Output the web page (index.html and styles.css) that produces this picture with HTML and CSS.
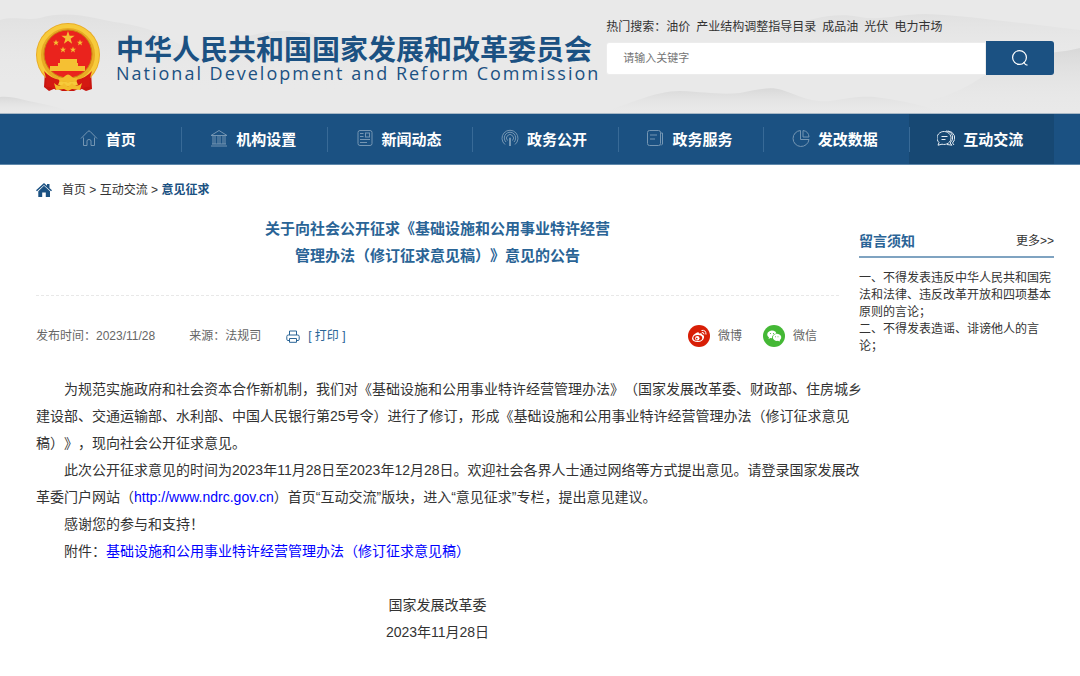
FILE: index.html
```html
<!DOCTYPE html>
<html lang="zh-CN">
<head>
    <meta charset="UTF-8">
    <meta name="viewport" content="width=device-width, initial-scale=1.0">
    <title>意见征求-国家发展和改革委员会</title>
    <link rel="stylesheet" href="styles.css">
</head>
<body>
    <header class="header">
        <svg class="header-bg" viewBox="0 0 1080 113" preserveAspectRatio="none" aria-hidden="true">
            <defs>
                <linearGradient id="hill" x1="0" y1="0" x2="0" y2="1">
                    <stop offset="0" stop-color="#c8c8c8" stop-opacity="0.5"/>
                    <stop offset="1" stop-color="#e6e6e6" stop-opacity="0"/>
                </linearGradient>
            </defs>
            <path fill="url(#hill)" opacity="0.5" d="M0 20 C15 16 25 21 40 18 C60 12 80 15 95 18 C120 24 140 24 160 34 L200 55 L200 85 L0 85Z"/>
            <path fill="url(#hill)" opacity="0.4" d="M190 60 C220 45 250 32 280 31 C310 30 330 38 360 58 L360 90 L190 90Z"/>
            <path fill="url(#hill)" d="M0 97 C15 96 25 101 38 103 C55 106 65 110 75 113 L0 113Z"/>
            <path fill="url(#hill)" d="M600 113 C630 104 655 91 680 91 C705 92 720 95 740 93 C755 90 770 86 782 90 C800 96 812 103 830 101 C850 98 865 95 882 98 C900 101 920 103 940 113Z"/>
            <path fill="url(#hill)" opacity="0.5" d="M780 30 C810 18 835 12 860 17 C880 21 900 14 925 14 C960 15 990 20 1030 24 L1080 30 L1080 60 L780 60Z"/>
            <path fill="url(#hill)" d="M930 100 C970 92 990 66 1020 60 C1040 52 1055 54 1080 48 L1080 113 L930 113Z"/>
        </svg>
        <div class="header-inner">
            <a class="logo" href="#">
                <svg class="emblem" viewBox="0 0 64 69" aria-hidden="true">
                    <path fill="#c8150f" d="M9 48 L55 48 L56 66 L50 68 L44 65 L38 68 L26 68 L20 65 L13 68 L8 64Z"/>
                    <circle cx="32" cy="32" r="32" fill="#e9ab24"/>
                    <circle cx="32" cy="32" r="29" fill="none" stroke="#f7cb3b" stroke-width="4"/>
                    <circle cx="32" cy="31" r="24" fill="#ea231d" stroke="#c98512"/>
                    <g fill="#f5c033">
                        <path d="M32 8 l1.600 4.800 5 0 -4 3 1.500 4.900 -4.100 -2.900 -4.100 2.900 1.500 -4.900 -4 -3 5 0Z"/>
                        <path id="star" d="M20 16.500 l.8 2.200 2.300 0 -1.800 1.400 .6 2.300 -1.900 -1.300 -1.900 1.300 .6 -2.300 -1.800 -1.400 2.300 0Z"/>
                        <use href="#star" x="24"/>
                        <use href="#star" x="7" y="7"/>
                        <use href="#star" x="17" y="7"/>
                        <path d="M24 36 H41 V40 H42 V43 H49 V48 H14 V43 H22 V40 H24Z"/>
                    </g>
                    <path fill="#d41912" d="M8 48 Q14 55 24 57 L20 67 Q14 63 10 64 Q11 56 8 48Z M56 48 Q50 55 40 57 L44 67 Q50 63 54 64 Q53 56 56 48Z"/>
                    <path fill="#f3bd2c" d="M22 55 Q27 56 29 53 Q32 50 35 53 Q37 56 42 55 L40 59 Q36 57 32 60 Q28 57 24 59Z M18 60 Q24 66 28 60 L32 64 L36 60 Q40 66 46 60 L44 67 L36 66 L32 68 L28 66 L20 67Z"/>
                </svg>
                <span class="logo-text">
                    <span class="logo-cn">中华人民共和国国家发展和改革委员会</span>
                    <span class="logo-en">National Development and Reform Commission</span>
                </span>
            </a>
            <div class="search">
                <div class="hot-words">
                    <span>热门搜索：</span>
                    <a href="#">油价</a>
                    <a href="#">产业结构调整指导目录</a>
                    <a href="#">成品油</a>
                    <a href="#">光伏</a>
                    <a href="#">电力市场</a>
                </div>
                <form class="search-form">
                    <input type="text" class="search-input" placeholder="请输入关键字" aria-label="请输入关键字">
                    <button type="button" class="search-btn" aria-label="搜索">
                        <svg width="16" height="16" viewBox="0 0 16 16" fill="none" stroke="#fff" stroke-width="1.200">
                            <circle cx="7.500" cy="7.500" r="6.900"/>
                            <path d="M11.500 12 l2 2.500 2 .8"/>
                        </svg>
                    </button>
                </form>
            </div>
        </div>
    </header>

    <nav class="nav">
        <ul class="nav-list">
            <li><a href="#">
                <svg class="nav-icon" viewBox="0 0 18 18"><path d="M1 9.500 L8 2.300 Q9 1.400 10 2.300 L17 9.500 M3.500 8.500 V16.500 H7 V12 Q7 10.500 9 10.500 Q11 10.500 11 12 V16.500 H14.500 V8.500"/></svg>
                首页</a></li>
            <li><a href="#">
                <svg class="nav-icon" viewBox="0 0 18 18"><path d="M1 6.500 L9 1.500 L17 6.500Z M3 6.500 V15 M5 6.500 V15 M8 6.500 V15 M10 6.500 V15 M13 6.500 V15 M15 6.500 V15 M2 15 H16 M1 17 H17"/></svg>
                机构设置</a></li>
            <li><a href="#">
                <svg class="nav-icon" viewBox="0 0 18 18"><rect x="2" y="1.500" width="14" height="15" rx="2"/><rect x="9.500" y="4" width="4" height="4"/><path d="M4 4.500 H7.500 M4 7.500 H7.500 M4 10.500 H14 M4 13.500 H11"/></svg>
                新闻动态</a></li>
            <li><a href="#">
                <svg class="nav-icon" viewBox="0 0 18 18"><path d="M4 15.500 A8 8 0 1 1 14 15.500 M5 13 A5.700 5.700 0 1 1 13 13 M6.500 11.500 A3.500 3.500 0 1 1 11.500 11.500 M8.500 17 V9 H9.500 V17"/></svg>
                政务公开</a></li>
            <li><a href="#">
                <svg class="nav-icon" viewBox="0 0 18 18"><rect x="1.500" y="1.500" width="13" height="15" rx="2"/><path d="M4 6 H11 M4 10 H9 M14.500 4 H16.500 V15 L15 16.500"/></svg>
                政务服务</a></li>
            <li><a href="#">
                <svg class="nav-icon" viewBox="0 0 18 18"><path d="M8.500 1.500 A8 8 0 1 0 17 10.500 M8.500 1.500 V10.500 H17 M11 1.500 A7 7 0 0 1 17 8 H11Z"/></svg>
                发改数据</a></li>
            <li><a href="#" class="active">
                <svg class="nav-icon" viewBox="0 0 18 18"><path d="M2 13.500 A7 6.500 0 1 1 5 15.200 L1 16.200Z M9 2 A7 6.700 0 0 1 13 14 L15 16.200 L10 15.500 M11 2 A7.500 7 0 0 1 15.500 14 L17 16 M4.500 7.500 H10.500 M4.500 10.500 H8.500"/></svg>
                互动交流</a></li>
        </ul>
    </nav>

    <div class="container">
        <div class="breadcrumb">
            <svg width="16" height="14" viewBox="0 0 16 14" fill="#1b5182" aria-hidden="true">
                <path d="M8 0 L11 2.700 V1 H13.500 V5 L16 7.300 L15 8.300 L8 2 L1 8.300 L0 7.300Z M8 2.800 L14 8.200 V14 H9.800 V9.500 H6.200 V14 H2.300 V8.200Z"/>
            </svg>
            <span><a href="#">首页</a> &gt; <a href="#">互动交流</a> &gt; <a href="#" class="current">意见征求</a></span>
        </div>

        <div class="content">
            <main class="article">
                <h1 class="title">关于向社会公开征求《基础设施和公用事业特许经营<br>管理办法（修订征求意见稿）》意见的公告</h1>
                <div class="meta">
                    <span>发布时间：2023/11/28</span>
                    <span class="source">来源：法规司</span>
                    <a href="#" class="print">
                        <svg width="14" height="13" viewBox="0 0 14 13" fill="none" stroke="#2a6496" aria-hidden="true">
                            <path d="M3.500 5 V1 H10.500 V5 M3.500 10.500 H2 Q.8 10.500 .8 9.300 V6.500 Q.8 5 2.300 5 H11.700 Q13.200 5 13.200 6.500 V9.300 Q13.200 10.500 12 10.500 H10.500 M3.500 8.500 H10.500 V12.300 H3.500Z"/>
                        </svg>
                        [ 打印 ]
                    </a>
                    <div class="share">
                        <a href="#">
                            <svg width="22" height="22" viewBox="0 0 22 22" aria-hidden="true">
                                <circle cx="11" cy="11" r="11" fill="#d81e06"/>
                                <path fill="#fff" d="M9 7.500 Q11 6.500 11 8.500 Q14 7.500 14 9.500 Q16.500 10.300 16 12.700 Q15 16.800 9.800 17 Q4.300 16.800 4 13.500 Q4.500 9.500 9 7.500Z"/>
                                <ellipse cx="9.800" cy="13" rx="4.500" ry="3" fill="#d81e06"/>
                                <circle cx="9.300" cy="13.200" r="2.200" fill="#fff"/>
                                <circle cx="8.700" cy="13.600" r="0.900" fill="#d81e06"/>
                                <path fill="none" stroke="#fff" d="M13.500 5.500 Q18 4.500 18 9.500 M13.800 7.500 Q16 7.200 16 9.300"/>
                            </svg>
                            微博
                        </a>
                        <a href="#">
                            <svg width="22" height="22" viewBox="0 0 22 22" aria-hidden="true">
                                <circle cx="11" cy="11" r="11" fill="#44b835"/>
                                <path fill="#fff" d="M5.500 14 L6 12.500 A4.700 3.900 0 1 1 13.500 8.600 Q9 9 9 13.300 L7.500 13Z"/>
                                <path fill="#fff" d="M16.500 16.500 L15 15.800 A4.200 3.500 0 1 1 17 14.900Z"/>
                                <g fill="#44b835">
                                    <circle cx="7.500" cy="8.500" r="0.600"/><circle cx="10.500" cy="8.500" r="0.600"/>
                                    <circle cx="12.500" cy="11.700" r="0.500"/><circle cx="15" cy="11.700" r="0.500"/>
                                </g>
                            </svg>
                            微信
                        </a>
                    </div>
                </div>
                <div class="article-body">
                    <p>为规范实施政府和社会资本合作新机制，我们对《基础设施和公用事业特许经营管理办法》（国家发展改革委、财政部、住房城乡建设部、交通运输部、水利部、中国人民银行第25号令）进行了修订，形成《基础设施和公用事业特许经营管理办法（修订征求意见稿）》，现向社会公开征求意见。</p>
                    <p>此次公开征求意见的时间为2023年11月28日至2023年12月28日。欢迎社会各界人士通过网络等方式提出意见。请登录国家发展改革委门户网站（<a href="#">http://www.ndrc.gov.cn</a>）首页“互动交流”版块，进入“意见征求”专栏，提出意见建议。</p>
                    <p>感谢您的参与和支持！</p>
                    <p>附件：<a href="#">基础设施和公用事业特许经营管理办法（修订征求意见稿）</a></p>
                </div>
                <div class="signature">
                    <p>国家发展改革委</p>
                    <p>2023年11月28日</p>
                </div>
            </main>

            <aside class="sidebar">
                <div class="sidebar-head">
                    <h2>留言须知</h2>
                    <a href="#">更多&gt;&gt;</a>
                </div>
                <p>一、不得发表违反中华人民共和国宪法和法律、违反改革开放和四项基本原则的言论；</p>
                <p>二、不得发表造谣、诽谤他人的言论；</p>
            </aside>
        </div>
    </div>
</body>
</html>
```
FILE: styles.css
```css
* {
    box-sizing: border-box;
}

body {
    margin: 0;
    font-family: "Liberation Sans", "Noto Sans CJK SC", sans-serif;
    font-size: 12px;
    color: #333;
    background: #fff;
    text-spacing-trim: space-all;
}

a {
    color: inherit;
    text-decoration: none;
}

h1, h2, p, ul {
    margin: 0;
    padding: 0;
}

svg {
    flex-shrink: 0;
}

/* header */
.header {
    position: relative;
    background: #e9e9e9;
    border-bottom: 1px solid #a9b8c6;
}

.header-bg {
    position: absolute;
    top: 0;
    left: 0;
    width: 100%;
    height: 100%;
}

.header-inner {
    position: relative;
    display: flex;
    gap: 6px;
    padding: 18px 26px 21px 36px;
}

.logo {
    display: flex;
    align-items: flex-start;
    gap: 16px;
    padding-top: 5px;
    color: #1b5182;
    white-space: nowrap;
}

.emblem {
    width: 64px;
    height: 69px;
}

.logo-text {
    display: flex;
    flex-direction: column;
    padding-top: 14px;
}

.logo-cn {
    font-size: 28px;
    font-weight: bold;
    line-height: 28px;
}

.logo-en {
    font-family: "Open Sans", sans-serif;
    font-size: 18px;
    line-height: 16px;
    letter-spacing: 2px;
}

.search {
    flex: 1;
    min-width: 0;
}

.hot-words {
    display: flex;
    gap: 6px;
    line-height: 18px;
    white-space: nowrap;
}

.hot-words span {
    margin-right: -6px;
}

.search-form {
    display: flex;
    align-items: center;
    margin-top: 5px;
}

.search-input {
    flex: 1;
    min-width: 0;
    height: 33px;
    padding: 0 16px;
    border: 1px solid #ececec;
    border-radius: 3px 0 0 3px;
    font-family: inherit;
    font-size: 11px;
    color: #333;
    background: #fff;
}

.search-input::placeholder {
    color: #757575;
}

.search-btn {
    display: flex;
    align-items: center;
    justify-content: center;
    width: 68px;
    height: 34px;
    border: none;
    border-radius: 0 3px 3px 0;
    background: #1b5182;
    cursor: pointer;
}

/* nav */
.nav {
    padding: 0 26px 0 36px;
    background: #1b5182;
    border-bottom: 1px solid #5f88ab;
}

.nav-list {
    display: flex;
    list-style: none;
}

.nav-list li {
    flex: 1;
}

.nav-list a {
    position: relative;
    display: flex;
    align-items: center;
    justify-content: center;
    gap: 8px;
    height: 50px;
    padding: 0 2px 2px 0;
    font-size: 15px;
    font-weight: bold;
    color: #fff;
}

.nav-list li + li a::before {
    content: "";
    position: absolute;
    left: 0;
    top: 13px;
    width: 1px;
    height: 25px;
    background: #386a97;
}

.nav-list .active {
    background: #174873;
}

.nav-icon {
    width: 18px;
    height: 18px;
    fill: none;
    stroke: #7596b3;
}

.active .nav-icon {
    stroke: #e4ecf3;
}

/* content */
.container {
    padding: 16px 26px 24px 36px;
}

.breadcrumb {
    display: flex;
    align-items: center;
    gap: 10px;
    line-height: 18px;
}

.breadcrumb .current {
    font-weight: bold;
    color: #1b5182;
}

.content {
    display: flex;
    gap: 20px;
}

.article {
    flex: 1;
    min-width: 0;
}

.title {
    padding: 16px 0 26px;
    border-bottom: 1px dashed #e8e8e8;
    font-size: 15px;
    line-height: 27px;
    text-align: center;
    color: #2a6496;
}

.meta {
    display: flex;
    align-items: center;
    padding: 29px 22px 29px 0;
    line-height: 22px;
    color: #666;
}

.source {
    margin-left: 34px;
}

.print {
    display: flex;
    align-items: center;
    gap: 8px;
    margin-left: 25px;
    color: #2a6496;
}

.share {
    display: flex;
    gap: 21px;
    margin-left: auto;
}

.share a {
    display: flex;
    align-items: center;
    gap: 8px;
}

/* the text below the share bar runs a little into the sidebar gutter */
.article-body {
    margin-right: -24px;
    font-size: 14px;
    line-height: 27px;
}

.article-body p {
    text-indent: 2em;
}

.article-body a {
    color: #0000ff;
}

.signature {
    margin-top: 27px;
    font-size: 14px;
    line-height: 27px;
    text-align: center;
}

.sidebar {
    width: 195px;
    padding-top: 32px;
    line-height: 17px;
}

.sidebar-head {
    display: flex;
    align-items: center;
    justify-content: space-between;
    margin-bottom: 12px;
    padding-bottom: 5px;
    border-bottom: 2px solid #7fa3c1;
    line-height: 20px;
}

.sidebar-head h2 {
    font-size: 14px;
    color: #2a6496;
}
```
